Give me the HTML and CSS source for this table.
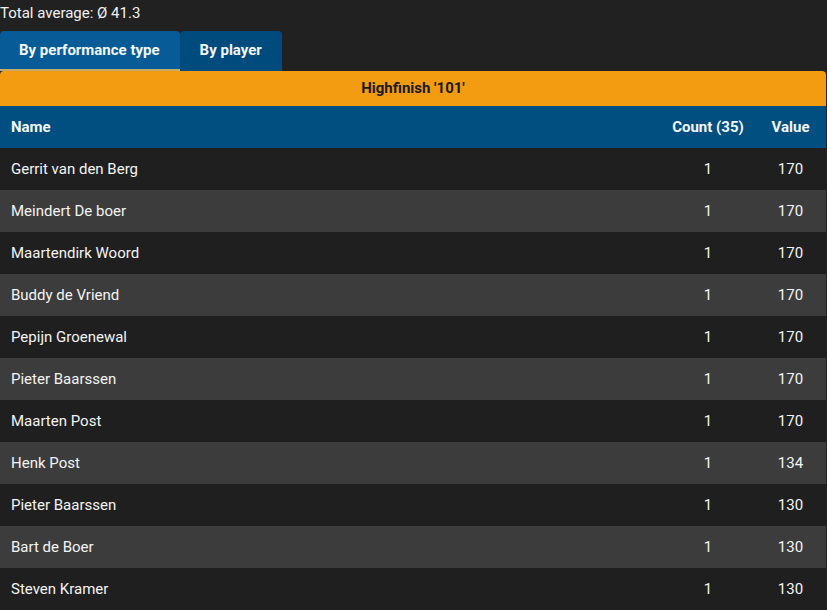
FILE: index.html
```html
<!DOCTYPE html>
<html>
<head>
<meta charset="utf-8">
<link rel="stylesheet" href="styles.css">
</head>
<body>
<div class="avg">Total average: Ø 41.3</div>
<div class="tabs">
  <div class="tab active">By performance type</div>
  <div class="tab">By player</div>
</div>
<div class="panel">
  <div class="title">Highfinish '101'</div>
  <table class="stats">
    <thead>
      <tr><th class="name">Name</th><th class="count">Count (35)</th><th class="value">Value</th></tr>
    </thead>
    <tbody>
      <tr><td class="name">Gerrit van den Berg</td><td class="count">1</td><td class="value">170</td></tr>
      <tr><td class="name">Meindert De boer</td><td class="count">1</td><td class="value">170</td></tr>
      <tr><td class="name">Maartendirk Woord</td><td class="count">1</td><td class="value">170</td></tr>
      <tr><td class="name">Buddy de Vriend</td><td class="count">1</td><td class="value">170</td></tr>
      <tr><td class="name">Pepijn Groenewal</td><td class="count">1</td><td class="value">170</td></tr>
      <tr><td class="name">Pieter Baarssen</td><td class="count">1</td><td class="value">170</td></tr>
      <tr><td class="name">Maarten Post</td><td class="count">1</td><td class="value">170</td></tr>
      <tr><td class="name">Henk Post</td><td class="count">1</td><td class="value">134</td></tr>
      <tr><td class="name">Pieter Baarssen</td><td class="count">1</td><td class="value">130</td></tr>
      <tr><td class="name">Bart de Boer</td><td class="count">1</td><td class="value">130</td></tr>
      <tr><td class="name">Steven Kramer</td><td class="count">1</td><td class="value">130</td></tr>
    </tbody>
  </table>
</div>
</body>
</html>
```
FILE: styles.css
```css
html, body {
  margin: 0;
  padding: 0;
  background: #212121;
  color: #ffffff;
  font-family: Roboto, "Liberation Sans", sans-serif;
  font-size: 15px;
}
.avg {
  padding: 3px 0 8px 0;
  line-height: 20px;
  color: #f2f2f2;
}
.tabs {
  display: flex;
  width: 826px;
}
.tab {
  background: #004b7e;
  color: #f4f8fc;
  font-weight: 700;
  padding: 0 20px;
  line-height: 38px;
  border-bottom: 2px solid #004b7e;
  border-radius: 4px 4px 0 0;
}
.tab.active {
  padding-left: 19px;
  background: #075b96;
  border-bottom-color: #c4ab6c;
}
.panel {
  width: 826px;
}
.title {
  background: #f39c12;
  color: #1a1a1a;
  font-weight: 700;
  font-size: 15px;
  text-align: center;
  height: 35px;
  line-height: 35px;
  border-radius: 4px 4px 0 0;
}
.stats {
  width: 100%;
  border-collapse: collapse;
}
.stats th, .stats td {
  height: 42px;
  padding: 0 11px;
  box-sizing: border-box;
}
.stats thead tr {
  background: #004f80;
}
.stats th {
  font-weight: 700;
  color: #f4f8fc;
}
.stats th.name, .stats td.name {
  text-align: left;
}
.stats .count {
  width: 94px;
  text-align: center;
}
.stats .value {
  width: 71px;
  text-align: center;
}
.stats tbody tr {
  background: #1f1f1f;
}
.stats tbody tr:nth-child(even) {
  background: #3c3c3c;
}
.stats td {
  color: #f4f4f4;
}
```
